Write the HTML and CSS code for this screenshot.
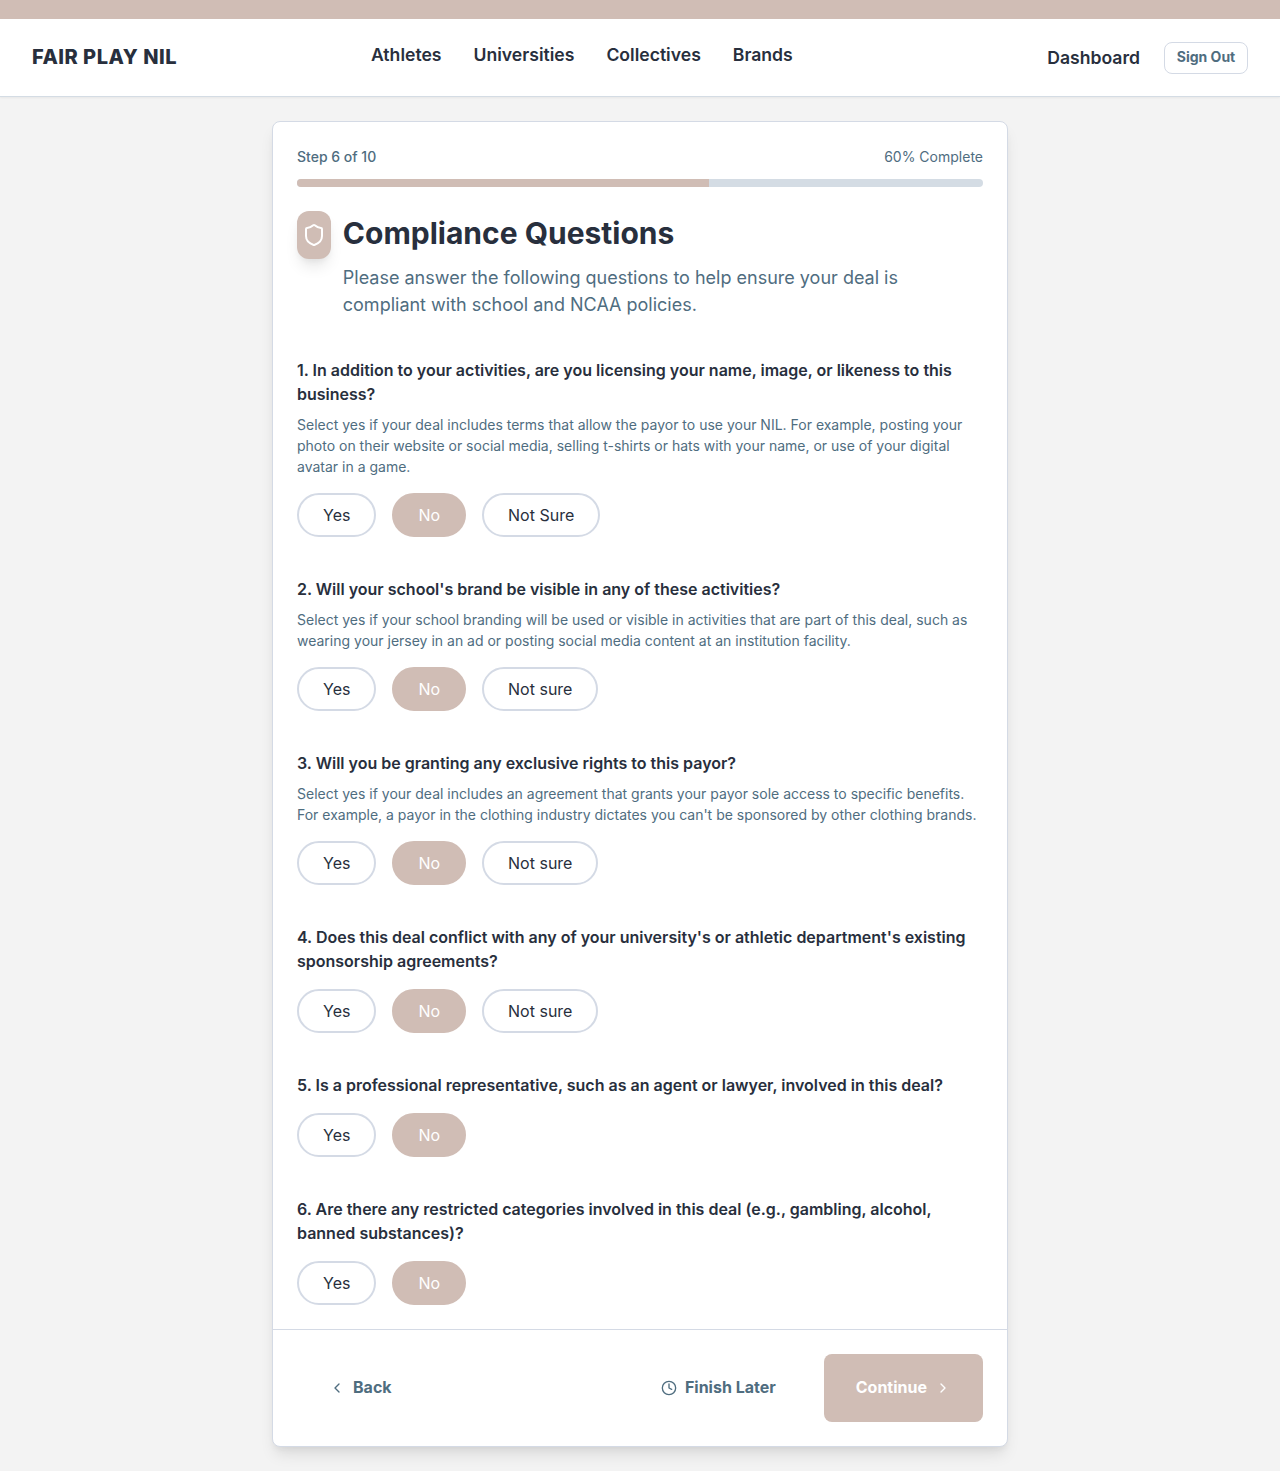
FILE: index.html
```html
<!DOCTYPE html>
<html lang="en">
<head>
<meta charset="utf-8">
<title>Fair Play NIL</title>
<link rel="stylesheet" href="styles.css">
</head>
<body>
<div class="topbar"></div>
<header class="header">
  <a class="logo">FAIR PLAY NIL</a>
  <nav class="nav"><a>Athletes</a><a>Universities</a><a>Collectives</a><a>Brands</a></nav>
  <div class="account"><a class="dashboard">Dashboard</a><button class="signout">Sign Out</button></div>
</header>
<main class="card">
  <div class="body">
    <div class="steps"><span class="step">Step 6 of 10</span><span>60% Complete</span></div>
    <div class="track"><div class="fill" style="width:60%"></div></div>
    <div class="intro">
      <div class="badge"><svg width="24" height="24" viewBox="0 0 24 24" fill="none" stroke="currentColor" stroke-width="2" stroke-linecap="round" stroke-linejoin="round"><path d="M20 13c0 5-3.500 7.500-7.660 8.950a1 1 0 0 1-.67-.01C7.500 20.500 4 18 4 13V6a1 1 0 0 1 1-1c2 0 4.500-1.200 6.240-2.720a1.170 1.170 0 0 1 1.520 0C14.510 3.810 17 5 19 5a1 1 0 0 1 1 1z"/></svg></div>
      <div><h1>Compliance Questions</h1><p class="lead">Please answer the following questions to help ensure your deal is compliant with school and NCAA policies.</p></div>
    </div>
    <div class="questions">
      <section><h2>1. In addition to your activities, are you licensing your name, image, or likeness to this business?</h2><p class="hint">Select yes if your deal includes terms that allow the payor to use your NIL. For example, posting your photo on their website or social media, selling t-shirts or hats with your name, or use of your digital avatar in a game.</p><div class="options"><button>Yes</button><button class="on">No</button><button>Not Sure</button></div></section>
      <section><h2>2. Will your school's brand be visible in any of these activities?</h2><p class="hint">Select yes if your school branding will be used or visible in activities that are part of this deal, such as wearing your jersey in an ad or posting social media content at an institution facility.</p><div class="options"><button>Yes</button><button class="on">No</button><button>Not sure</button></div></section>
      <section><h2>3. Will you be granting any exclusive rights to this payor?</h2><p class="hint">Select yes if your deal includes an agreement that grants your payor sole access to specific benefits. For example, a payor in the clothing industry dictates you can't be sponsored by other clothing brands.</p><div class="options"><button>Yes</button><button class="on">No</button><button>Not sure</button></div></section>
      <section><h2>4. Does this deal conflict with any of your university's or athletic department's existing sponsorship agreements?</h2><div class="options"><button>Yes</button><button class="on">No</button><button>Not sure</button></div></section>
      <section><h2>5. Is a professional representative, such as an agent or lawyer, involved in this deal?</h2><div class="options"><button>Yes</button><button class="on">No</button></div></section>
      <section><h2>6. Are there any restricted categories involved in this deal (e.g., gambling, alcohol, banned substances)?</h2><div class="options"><button>Yes</button><button class="on">No</button></div></section>
    </div>
  </div>
  <footer class="footer">
    <button class="back"><svg class="icon" viewBox="0 0 24 24"><path d="m15 18-6-6 6-6"/></svg><span>Back</span></button>
    <div class="actions">
      <button class="later"><svg class="icon" viewBox="0 0 24 24"><circle cx="12" cy="12" r="10"/><path d="M12 6v6l4 2"/></svg><span>Finish Later</span></button>
      <button class="continue"><span>Continue</span><svg class="icon" viewBox="0 0 24 24"><path d="m9 18 6-6-6-6"/></svg></button>
    </div>
  </footer>
</main>
</body>
</html>
```
FILE: styles.css
```css
* { box-sizing: border-box; }
body { margin: 0; min-height: 1471px; background: #f3f3f3; color: #282f3d; font: 16px/24px Inter, sans-serif; }
h1, h2, p { margin: 0; }
button { font: inherit; color: inherit; background: none; border: 0; padding: 0; }
.topbar { height: 19px; background: #d0bdb5; }
.header { height: 78px; padding: 0 32px; display: grid; grid-template-columns: 339px 1fr auto; align-items: center; background: #fff; border-bottom: 1px solid #d4dce4; box-shadow: 0 1px 2px rgba(0,0,0,.05); }
.logo { font-size: 20px; font-weight: 800; letter-spacing: .5px; padding-bottom: 2px; }
.nav { display: flex; gap: 32px; font-size: 17.6px; font-weight: 600; padding-bottom: 5px; }
.account { display: flex; align-items: center; gap: 24px; }
.dashboard { font-size: 17.6px; font-weight: 600; }
.signout { width: 84px; height: 32px; padding-bottom: 2px; border: 1px solid #d4dae5; border-radius: 8px; font-size: 14px; font-weight: 700; color: #4f6d7f; }
.card { width: 736px; margin: 24px auto; background: #fff; border: 1px solid #d4dae5; border-radius: 8px; box-shadow: 0 10px 15px -3px rgba(0,0,0,.1), 0 4px 6px -2px rgba(0,0,0,.05); }
.body { padding: 24px; }
.steps { display: flex; justify-content: space-between; font-size: 14px; line-height: 21px; color: #4f6d7f; margin-bottom: 12px; }
.step { font-weight: 500; }
.track { height: 8px; background: #d4dce4; border-radius: 4px; overflow: hidden; }
.fill { height: 100%; background: #d0bdb5; }
.intro { display: flex; align-items: flex-start; gap: 12px; margin-top: 24px; }
.badge { width: 33.8px; height: 48px; flex: none; display: flex; align-items: center; justify-content: center; background: #d0bdb5; color: #fff; border-radius: 12px; box-shadow: 0 10px 15px -3px rgba(0,0,0,.1), 0 4px 6px -2px rgba(0,0,0,.05); }
h1 { font-size: 30px; line-height: 45px; font-weight: 700; }
.lead { margin-top: 8px; font-size: 18px; line-height: 27px; color: #4f6d7f; }
.questions { display: flex; flex-direction: column; gap: 40px; margin-top: 40px; }
h2 { font-size: 16px; line-height: 24px; font-weight: 600; }
.hint { margin-top: 8px; font-size: 14px; line-height: 21px; color: #4f6d7f; }
.options { display: flex; gap: 16px; margin-top: 16px; }
.options button { height: 44px; padding: 0 24px; border: 2px solid #d4dae5; border-radius: 22px; }
.options .on { background: #d0bdb5; border-color: #d0bdb5; color: #fff; }
.footer { display: flex; justify-content: space-between; padding: 24px; border-top: 1px solid #d4dae5; }
.footer button { display: flex; align-items: center; gap: 8px; height: 68px; padding: 0 32px; font-weight: 700; color: #4f6d7f; }
.footer span { padding-bottom: 2px; }
.actions { display: flex; gap: 16px; }
.icon { width: 16px; height: 16px; fill: none; stroke: currentColor; stroke-width: 2; stroke-linecap: round; stroke-linejoin: round; }
.footer .continue { background: #d0bdb5; color: #fff; border-radius: 8px; }
```
